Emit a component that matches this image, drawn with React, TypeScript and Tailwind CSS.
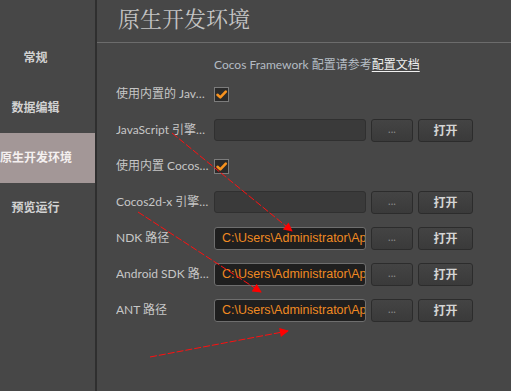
import React from "react";

const font = { fontFamily: 'Lato, "Noto Sans CJK SC", sans-serif' };

function Check() {
  return (
    <div className="w-[15px] h-[15px] border border-[#7c7c7c] bg-[#2b2b2b] flex items-center justify-center">
      <svg width="13" height="13" viewBox="0 0 13 13">
        <path d="M2.5 6.8 L5.3 9.4 L10.8 3.6" fill="none" stroke="#f7921e" strokeWidth="2.6" strokeLinecap="round" strokeLinejoin="round" />
      </svg>
    </div>
  );
}

function Buttons() {
  return (
    <>
      <div className="ml-[5px] w-[42px] h-[23px] rounded-[3px] border border-[#2c2c2c] bg-gradient-to-b from-[#444] to-[#3a3a3a] flex items-center justify-center text-[11px] text-[#8a8a8a] leading-none pb-[3px]">...</div>
      <div className="ml-[5px] w-[55px] h-[23px] rounded-[3px] border border-[#2c2c2c] bg-gradient-to-b from-[#444] to-[#3a3a3a] flex items-center justify-center text-[12px] font-bold text-[#d4d4d4]" style={{ fontFamily: '"Noto Sans CJK SC", sans-serif' }}>打开</div>
    </>
  );
}

function EmptyInput() {
  return (
    <div className="flex items-center">
      <div className="w-[152px] h-[22px] rounded-[3px] border border-[#303030] bg-[#3a3a3a]" />
      <Buttons />
    </div>
  );
}

function PathInput() {
  return (
    <div className="flex items-center">
      <input
        readOnly
        value="C:\Users\Administrator\AppData"
        className="w-[152px] h-[23px] rounded-[3px] border border-[#6e6e6e] bg-[#1f1f1f] pl-[7px] pr-0 text-[12.5px] text-[#f08a22] outline-none"
        style={{ fontFamily: '"Liberation Sans", sans-serif' }}
      />
      <Buttons />
    </div>
  );
}

const rows: { label: string; kind: "check" | "empty" | "path" }[] = [
  { label: "使用内置的 JavaScript", kind: "check" },
  { label: "JavaScript 引擎路径", kind: "empty" },
  { label: "使用内置 Cocos2d-x", kind: "check" },
  { label: "Cocos2d-x 引擎路径", kind: "empty" },
  { label: "NDK 路径", kind: "path" },
  { label: "Android SDK 路径", kind: "path" },
  { label: "ANT 路径", kind: "path" },
];

const nav = ["常规", "数据编辑", "原生开发环境", "预览运行"];

export default function App() {
  return (
    <div className="relative w-[511px] h-[391px] bg-[#474747] flex overflow-hidden" style={font}>
      <aside className="w-[97px] shrink-0 border-r-2 border-[#2f2f2f] pt-[33px]">
        {nav.map((n, i) => (
          <div key={n} className={`h-[50px] w-[95px] flex items-center ${i === 2 ? "bg-[#a39797]" : ""}`}>
            <span className={`w-[71px] text-center whitespace-nowrap text-[12px] font-bold ${i === 2 ? "text-[#f4f0f0]" : "text-[#d2d2d2]"}`}>{n}</span>
          </div>
        ))}
      </aside>
      <main className="flex-1">
        <div className="h-[43px] border-b border-[#6c6c6c] pl-[21px] flex items-center">
          <span className="text-[22px] text-[#c4c4c4] leading-none pb-[6px]" style={{ fontFamily: '"Noto Serif CJK SC", "Noto Sans CJK SC", serif' }}>原生开发环境</span>
        </div>
        <div className="mt-[11px] h-[22px] pl-[117px] flex items-center text-[12px] whitespace-nowrap">
          <span className="text-[#b4bcc4]">Cocos Framework 配置请参考</span>
          <span className="text-[#f0f0f0] underline underline-offset-2">配置文档</span>
        </div>
        {rows.map((r) => (
          <div key={r.label} className="h-[36px] flex items-center pl-[19px]">
            <div className="w-[98px] pr-[4px] text-[12px] text-[#c6c6c6] whitespace-nowrap overflow-hidden text-ellipsis">{r.label}</div>
            {r.kind === "check" ? <Check /> : r.kind === "empty" ? <EmptyInput /> : <PathInput />}
          </div>
        ))}
      </main>
      <svg className="absolute inset-0 pointer-events-none" width="511" height="391" viewBox="0 0 511 391">
        <defs>
          <marker id="ah" viewBox="0 0 10 10" refX="9" refY="5" markerWidth="10" markerHeight="9" markerUnits="userSpaceOnUse" orient="auto">
            <path d="M0 0 L10 5 L0 10 z" fill="#ff0000" />
          </marker>
        </defs>
        <g stroke="#ff1010" strokeWidth="1" strokeDasharray="7 2" fill="none">
          <line x1="172" y1="133" x2="292" y2="231" markerEnd="url(#ah)" />
          <line x1="138" y1="212" x2="261" y2="292" markerEnd="url(#ah)" />
          <line x1="150" y1="357" x2="288" y2="331" markerEnd="url(#ah)" />
        </g>
      </svg>
    </div>
  );
}
